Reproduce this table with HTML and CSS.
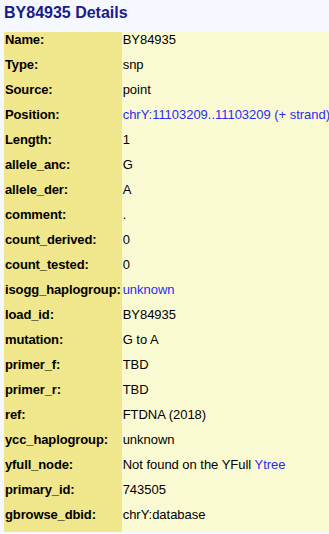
FILE: index.html
```html
<!DOCTYPE html>
<html>
<head>
<meta charset="utf-8">
<link rel="stylesheet" href="styles.css">
</head>
<body>
<h1 class="title">BY84935 Details</h1>
<table class="details">
<tr><td class="k">Name:</td><td class="v">BY84935</td></tr>
<tr><td class="k">Type:</td><td class="v">snp</td></tr>
<tr><td class="k">Source:</td><td class="v">point</td></tr>
<tr><td class="k">Position:</td><td class="v"><a class="lnk" href="#">chrY:11103209..11103209 (+ strand)</a></td></tr>
<tr><td class="k">Length:</td><td class="v">1</td></tr>
<tr><td class="k">allele_anc:</td><td class="v">G</td></tr>
<tr><td class="k">allele_der:</td><td class="v">A</td></tr>
<tr><td class="k">comment:</td><td class="v">.</td></tr>
<tr><td class="k">count_derived:</td><td class="v">0</td></tr>
<tr><td class="k">count_tested:</td><td class="v">0</td></tr>
<tr><td class="k">isogg_haplogroup:</td><td class="v"><a class="lnk" href="#">unknown</a></td></tr>
<tr><td class="k">load_id:</td><td class="v">BY84935</td></tr>
<tr><td class="k">mutation:</td><td class="v">G to A</td></tr>
<tr><td class="k">primer_f:</td><td class="v">TBD</td></tr>
<tr><td class="k">primer_r:</td><td class="v">TBD</td></tr>
<tr><td class="k">ref:</td><td class="v">FTDNA (2018)</td></tr>
<tr><td class="k">ycc_haplogroup:</td><td class="v">unknown</td></tr>
<tr><td class="k">yfull_node:</td><td class="v">Not found on the YFull <a class="lnk" href="#">Ytree</a></td></tr>
<tr><td class="k">primary_id:</td><td class="v">743505</td></tr>
<tr><td class="k">gbrowse_dbid:</td><td class="v">chrY:database</td></tr>
</table>
</body>
</html>
```
FILE: styles.css
```css
html, body {
  margin: 0;
  padding: 0;
  background: #f5f9ff;
  overflow: hidden;
}
body {
  padding: 0 0 0 4px;
  font-family: "Liberation Sans", Arial, sans-serif;
  color: #000;
}
.title {
  margin: 0;
  padding-top: 4px;
  height: 32px;
  box-sizing: border-box;
  font-size: 16px;
  line-height: 18px;
  font-weight: bold;
  color: #1a1a8a;
  white-space: nowrap;
}
.details {
  border-collapse: collapse;
  border-spacing: 0;
  font-size: 13px;
  white-space: nowrap;
  table-layout: fixed;
}
.details td {
  height: 25px;
  box-sizing: border-box;
  padding: 1px 1px 0 1px;
  line-height: 14px;
  vertical-align: top;
}
.k {
  width: 118px;
  background: #f0e68c;
  font-weight: bold;
  letter-spacing: -0.12px;
  overflow: visible;
}
.v {
  width: 240px;
  background: #fafad2;
  letter-spacing: -0.03px;
}
.lnk {
  color: #2b2bf0;
  text-decoration: none;
}
```
